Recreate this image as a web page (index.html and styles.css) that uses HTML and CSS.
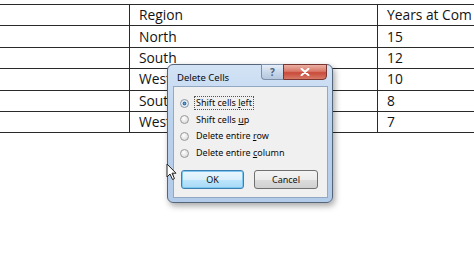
FILE: index.html
```html
<!DOCTYPE html>
<html lang="en">
<head>
    <meta charset="UTF-8">
    <meta name="viewport" content="width=device-width, initial-scale=1.0">
    <title>Delete Cells</title>
    <link rel="stylesheet" href="styles.css">
</head>
<body>
    <main class="sheet">
        <table class="grid">
            <tr><td class="c1"></td><td class="c2">Region</td><td class="c3">Years at Com</td></tr>
            <tr><td class="c1"></td><td class="c2">North</td><td class="c3">15</td></tr>
            <tr><td class="c1"></td><td class="c2">South</td><td class="c3">12</td></tr>
            <tr><td class="c1"></td><td class="c2">West</td><td class="c3">10</td></tr>
            <tr><td class="c1"></td><td class="c2">South</td><td class="c3">8</td></tr>
            <tr><td class="c1"></td><td class="c2">West</td><td class="c3">7</td></tr>
        </table>

        <div class="dialog">
            <div class="titlebar">
                <span class="title">Delete Cells</span>
                <div class="controls">
                    <span class="btn-help">?</span>
                    <span class="btn-close">
                        <svg width="10" height="8" viewBox="0 0 10 8">
                            <path d="M1.5 0.8 L8.5 7.2 M8.5 0.8 L1.5 7.2" stroke="#fff" stroke-width="2" stroke-linecap="round"/>
                        </svg>
                    </span>
                </div>
            </div>
            <div class="panel">
                <ul class="options">
                    <li><span class="radio checked"></span><span class="label focus">Shift cells <u>l</u>eft</span></li>
                    <li><span class="radio"></span><span class="label">Shift cells <u>u</u>p</span></li>
                    <li><span class="radio"></span><span class="label">Delete entire <u>r</u>ow</span></li>
                    <li><span class="radio"></span><span class="label">Delete entire <u>c</u>olumn</span></li>
                </ul>
                <div class="buttons">
                    <button class="button default">OK</button>
                    <button class="button">Cancel</button>
                </div>
            </div>
        </div>

        <svg class="cursor" width="11" height="18" viewBox="0 0 11 18">
            <path d="M1 1 L1 14 L4 11 L6.5 16.5 L8.5 15.6 L6 10.2 L10 10.2 Z" fill="#fff" stroke="#222" stroke-width="1"/>
        </svg>
    </main>
</body>
</html>
```

FILE: styles.css
```css
body {
    margin: 0;
    background-color: #fff;
    font-family: "Open Sans", "Liberation Sans", sans-serif;
    overflow: hidden;
}

.sheet {
    position: relative;
    width: 474px;
    height: 266px;
    padding-top: 4px;
    box-sizing: border-box;
    overflow: hidden;
}

.grid {
    border-collapse: collapse;
    margin-left: -12px;
    width: 540px;
    color: #141414;
    font-size: 13.8px;
}

.grid td {
    border: 1px solid #2a2a2a;
    height: 20.4px;
    padding: 0 0 0 9px;
    line-height: 20px;
    white-space: nowrap;
}

.grid .c1 {
    width: 131px;
}

.grid .c2 {
    width: 238px;
}

/* dialog sits on top of the sheet */
.dialog {
    position: absolute;
    left: 167px;
    top: 64px;
    width: 166px;
    height: 139px;
    box-sizing: border-box;
    border: 1px solid #55657a;
    border-radius: 6px;
    background: linear-gradient(to bottom, #d3e3f5 0%, #bcd3ee 40%, #b2cbe9 100%);
    box-shadow: 2px 3px 6px rgba(0, 0, 0, 0.35);
    padding: 0 4px 4px 5px;
    display: flex;
    flex-direction: column;
    font-family: "Noto Sans", "Open Sans", sans-serif;
    font-size: 9px;
    color: #0a0a0a;
}

.titlebar {
    height: 21px;
    display: flex;
    align-items: flex-start;
    justify-content: space-between;
}

.title {
    margin: 6px 0 0 4px;
    font-size: 9.5px;
}

.controls {
    display: flex;
    margin-top: -1px;
    margin-right: 1px;
}

.btn-help {
    width: 22px;
    height: 16px;
    box-sizing: border-box;
    border: 1px solid #7d8fa6;
    border-right: none;
    border-radius: 0 0 0 4px;
    background: linear-gradient(to bottom, #e6eef8 0%, #c9d8ea 50%, #b4c7df 100%);
    color: #4e5f77;
    font-size: 10px;
    font-weight: bold;
    text-align: center;
    line-height: 14px;
}

.btn-close {
    width: 44px;
    height: 16px;
    box-sizing: border-box;
    border: 1px solid #7a3530;
    border-radius: 0 0 4px 0;
    background: linear-gradient(to bottom, #eab0a2 0%, #d9786a 45%, #c94a3a 55%, #d67a66 100%);
    display: flex;
    align-items: center;
    justify-content: center;
}

.panel {
    flex: 1;
    background-color: #f0f0f0;
    border: 1px solid #93a9c3;
    padding: 8px 0 0 6px;
    display: flex;
    flex-direction: column;
}

.options {
    list-style: none;
    margin: 0;
    padding: 0;
}

.options li {
    height: 16.6px;
    display: flex;
    align-items: center;
}

.radio {
    width: 9px;
    height: 9px;
    box-sizing: border-box;
    border-radius: 50%;
    border: 1px solid #9a9a9a;
    background: radial-gradient(circle at 40% 35%, #ffffff 0%, #e4e4e4 60%, #cfcfcf 100%);
    margin-right: 5px;
    flex-shrink: 0;
}

.radio.checked {
    border-color: #8a97a6;
    background: radial-gradient(circle at 50% 50%, #6fa7d6 0%, #2b6aa5 30%, #dfe6ee 45%, #f6f6f6 100%);
}

.label {
    padding: 0 1px;
    line-height: 12px;
    border: 1px dotted transparent;
}

.label.focus {
    border-color: #555;
}

.label u {
    text-underline-offset: 1px;
}

.buttons {
    display: flex;
    gap: 10px;
    margin: 9px 0 0 1px;
}

.button {
    height: 19px;
    box-sizing: border-box;
    border: 1px solid #707070;
    border-radius: 3px;
    background: linear-gradient(to bottom, #f3f3f3 0%, #ebebeb 50%, #dddddd 51%, #d0d0d0 100%);
    font-family: "Noto Sans", "Open Sans", sans-serif;
    font-size: 9px;
    color: #111;
    padding: 0;
    width: 64px;
}

.button.default {
    width: 63px;
    border-color: #3c7fb1;
    box-shadow: inset 0 0 0 1px #7dc7f0;
    background: linear-gradient(to bottom, #eaf6fd 0%, #d9f0fc 50%, #bee6fd 51%, #a7d9f5 100%);
}

.cursor {
    position: absolute;
    left: 166px;
    top: 163px;
}
```
